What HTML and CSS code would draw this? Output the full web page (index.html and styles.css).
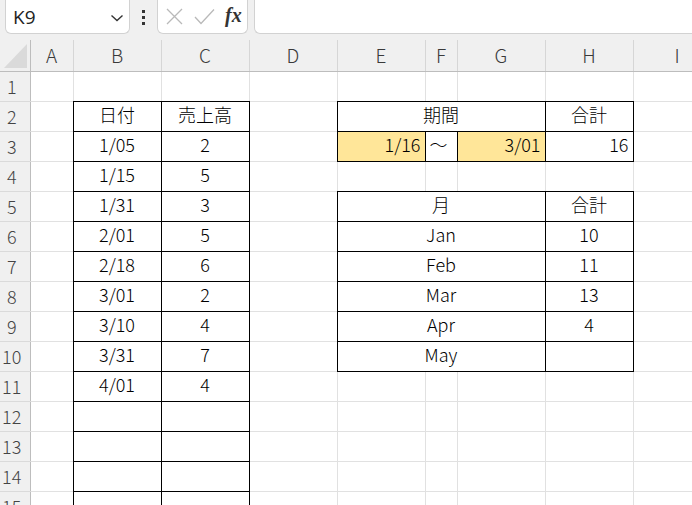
FILE: index.html
```html
<!DOCTYPE html>
<html>
<head>
<meta charset="UTF-8">
<title>Sheet1</title>
<link rel="stylesheet" href="styles.css">
</head>
<body>
	<div class="bar">
		<div class="namebox">
			<span>K9</span>
			<svg class="chev" width="14" height="8" viewBox="0 0 14 8"><path d="M1.5 1.5 L7 6.5 L12.5 1.5" fill="none" stroke="#333" stroke-width="1.4"/></svg>
		</div>
		<div class="kebab"><i></i><i></i><i></i></div>
		<div class="fxbox">
			<svg width="17" height="17" viewBox="0 0 17 17"><path d="M1 1 L16 16 M16 1 L1 16" stroke="#b9b9b9" stroke-width="1.3" fill="none"/></svg>
			<svg width="21" height="17" viewBox="0 0 21 17"><path d="M1 9 L7 15.5 L20 1.5" stroke="#b9b9b9" stroke-width="1.3" fill="none"/></svg>
			<span class="fx">fx</span>
		</div>
		<div class="formula"></div>
	</div>

	<table class="sheet">
		<colgroup>
			<col class="c-rh"><col class="c-a"><col><col><col><col><col class="c-f"><col><col><col>
		</colgroup>
		<thead>
			<tr>
				<th class="corner"><svg width="23" height="24" viewBox="0 0 23 24"><polygon points="0,24 23,24 23,0" fill="#dadada"/></svg></th>
				<th>A</th><th>B</th><th>C</th><th>D</th><th>E</th><th>F</th><th>G</th><th>H</th><th>I</th>
			</tr>
		</thead>
		<tbody>
			<tr><th>1</th><td></td><td></td><td></td><td></td><td></td><td></td><td></td><td></td><td></td></tr>
			<tr><th>2</th><td></td><td class="bx">日付</td><td class="bx">売上高</td><td></td><td class="bx" colspan="3">期間</td><td class="bx">合計</td><td></td></tr>
			<tr><th>3</th><td></td><td class="bx">1/05</td><td class="bx">2</td><td></td><td class="bx fill num">1/16</td><td class="bx left">〜</td><td class="bx fill num">3/01</td><td class="bx num">16</td><td></td></tr>
			<tr><th>4</th><td></td><td class="bx">1/15</td><td class="bx">5</td><td></td><td></td><td></td><td></td><td></td><td></td></tr>
			<tr><th>5</th><td></td><td class="bx">1/31</td><td class="bx">3</td><td></td><td class="bx" colspan="3">月</td><td class="bx">合計</td><td></td></tr>
			<tr><th>6</th><td></td><td class="bx">2/01</td><td class="bx">5</td><td></td><td class="bx" colspan="3">Jan</td><td class="bx">10</td><td></td></tr>
			<tr><th>7</th><td></td><td class="bx">2/18</td><td class="bx">6</td><td></td><td class="bx" colspan="3">Feb</td><td class="bx">11</td><td></td></tr>
			<tr><th>8</th><td></td><td class="bx">3/01</td><td class="bx">2</td><td></td><td class="bx" colspan="3">Mar</td><td class="bx">13</td><td></td></tr>
			<tr><th>9</th><td></td><td class="bx">3/10</td><td class="bx">4</td><td></td><td class="bx" colspan="3">Apr</td><td class="bx">4</td><td></td></tr>
			<tr><th>10</th><td></td><td class="bx">3/31</td><td class="bx">7</td><td></td><td class="bx" colspan="3">May</td><td class="bx"></td><td></td></tr>
			<tr><th>11</th><td></td><td class="bx">4/01</td><td class="bx">4</td><td></td><td></td><td></td><td></td><td></td><td></td></tr>
			<tr><th>12</th><td></td><td class="bx"></td><td class="bx"></td><td></td><td></td><td></td><td></td><td></td><td></td></tr>
			<tr><th>13</th><td></td><td class="bx"></td><td class="bx"></td><td></td><td></td><td></td><td></td><td></td><td></td></tr>
			<tr><th>14</th><td></td><td class="bx"></td><td class="bx"></td><td></td><td></td><td></td><td></td><td></td><td></td></tr>
			<tr><th>15</th><td></td><td class="bx"></td><td class="bx"></td><td></td><td></td><td></td><td></td><td></td><td></td></tr>
		</tbody>
	</table>
</body>
</html>
```

FILE: styles.css
```css
html, body{
	margin: 0;
	overflow: hidden;
	background: #fff;
}
body{
	font: 300 18px "Noto Sans CJK JP", "Noto Sans", sans-serif;
	color: #000;
}

/* formula bar */
.bar{
	display: flex;
	align-items: flex-start;
	height: 40px;
	background: #f0f0f0;
	padding-left: 5px;
}
.namebox, .fxbox, .formula{
	box-sizing: border-box;
	height: 34px;
	background: #fff;
	border: 1px solid #d2d2d2;
	border-top: 0;
	border-radius: 0 0 6px 6px;
}
.namebox{
	width: 125px;
	display: flex;
	align-items: center;
	justify-content: space-between;
	padding: 0 5px 0 7px;
	font: 19px "Open Sans", "Noto Sans", sans-serif;
	color: #222;
}
.chev{ margin-top: 2px; }
.kebab{
	width: 26px;
	display: flex;
	flex-direction: column;
	align-items: center;
	gap: 3px;
	padding-top: 10px;
}
.kebab i{
	width: 3px; height: 3px;
	background: #333;
}
.fxbox{
	width: 91px;
	margin-left: 1px;
	display: flex;
	align-items: center;
	gap: 11px;
	padding-left: 8px;
}
.fx{
	font: italic bold 20px "Liberation Serif", serif;
	color: #333;
	margin-top: -2px;
	margin-left: -1px;
}
.formula{
	flex: 1;
	margin-left: 6px;
	border-right: 0;
	border-radius: 0 0 0 6px;
}

/* grid */
.sheet{
	border-collapse: collapse;
	table-layout: fixed;
	width: 721px;
}
.sheet col{
	width: 88px;
	border-right: 1px solid #e1e1e1;
}
.sheet col.c-rh{ width: 30px; }
.sheet col.c-a{ width: 43px; }
.sheet col.c-f{ width: 32px; }
.sheet tbody tr{
	height: 30px;
	border-bottom: 1px solid #e1e1e1;
}
.sheet thead tr{ height: 31px; }
.sheet thead th{
	background: #f0f0f0;
	border-right: 1px solid #d6d6d6;
	border-bottom: 1px solid #bdbdbd;
	font-weight: 300;
	font-size: 19px;
	color: #3a3a3a;
	padding: 0 0 1px;
}
.sheet thead th.corner{
	text-align: right;
	vertical-align: bottom;
	border-right-color: #bdbdbd;
	padding: 0 3px 3px 0;
	line-height: 0;
}
.sheet tbody th{
	background: #f0f0f0;
	border-right: 1px solid #bdbdbd;
	border-bottom: 1px solid #dadada;
	font-weight: 300;
	font-size: 18px;
	color: #444;
	padding: 0 6px 1px 0;
	text-align: center;
}
.sheet td{
	padding: 0 4px 4px;
	line-height: 24px;
	text-align: center;
	white-space: nowrap;
	overflow: hidden;
}
.sheet td.bx{ border: 1px solid #000; }
.sheet td.num{ text-align: right; }
.sheet td.left{ text-align: left; }
.sheet td.fill{ background: #ffe699; }
```
